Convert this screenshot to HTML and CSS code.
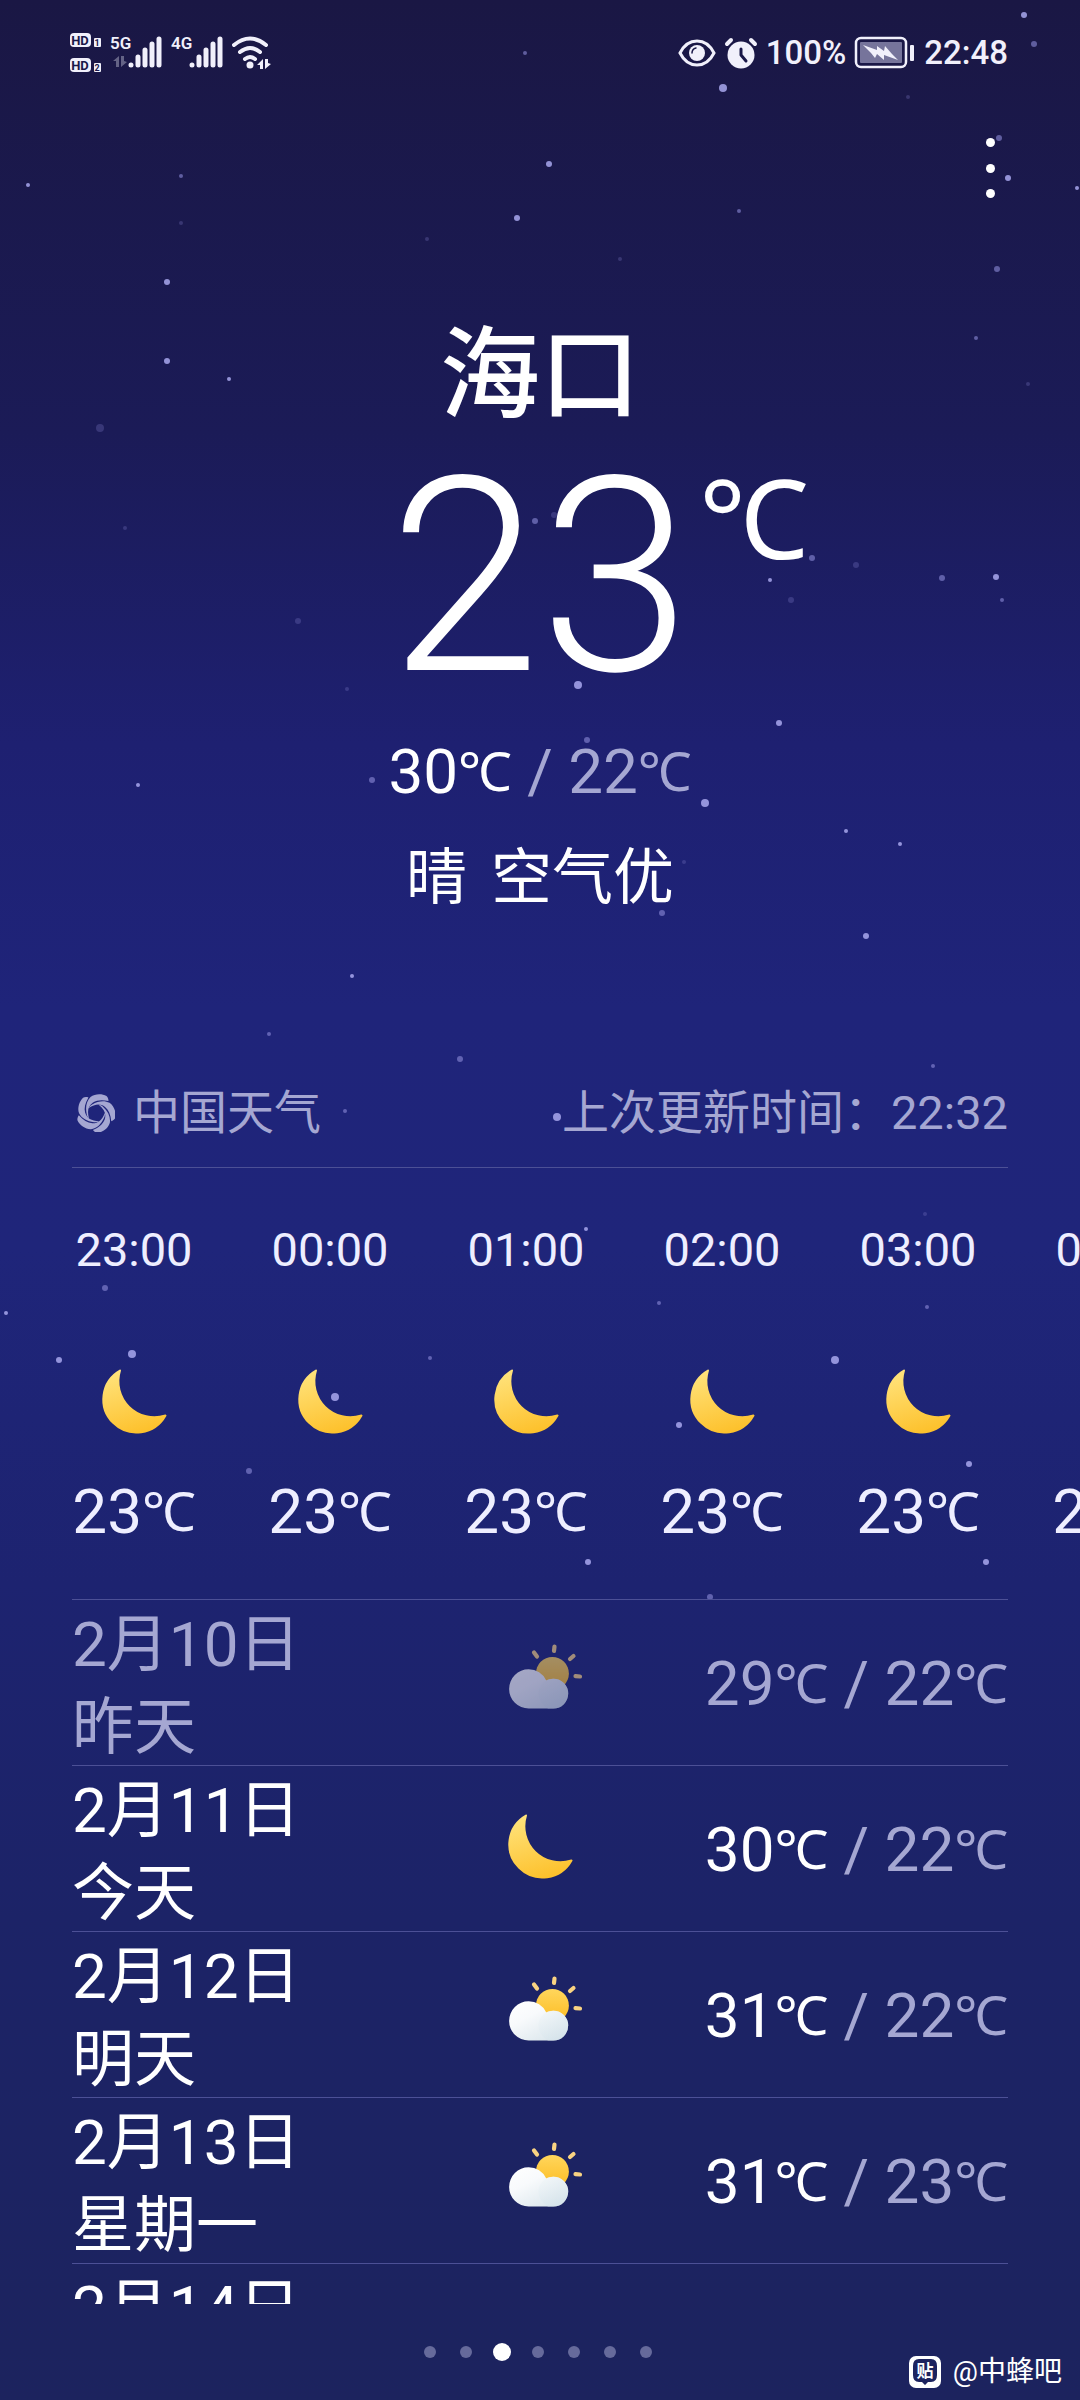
FILE: index.html
```html
<!DOCTYPE html>
<html lang="zh-CN">
<head>
<meta charset="utf-8">
<meta name="viewport" content="width=device-width, initial-scale=1">
<title>海口天气</title>
<link rel="stylesheet" href="styles.css">
</head>
<body>
<svg class="sky" viewBox="0 0 1080 2400" preserveAspectRatio="xMidYMid slice" aria-hidden="true">
  <g class="stars-bright">
    <circle cx="1024" cy="15" r="3"/><circle cx="723" cy="88" r="4"/><circle cx="1008" cy="178" r="3"/><circle cx="1077" cy="188" r="2"/>
    <circle cx="549" cy="164" r="3"/><circle cx="517" cy="218" r="3"/><circle cx="28" cy="185" r="2"/><circle cx="167" cy="282" r="3"/>
    <circle cx="167" cy="361" r="3"/><circle cx="229" cy="379" r="2"/><circle cx="770" cy="580" r="2"/><circle cx="996" cy="577" r="3"/>
    <circle cx="578" cy="685" r="4"/><circle cx="779" cy="723" r="3"/><circle cx="705" cy="803" r="4"/><circle cx="138" cy="785" r="2"/>
    <circle cx="846" cy="831" r="2"/><circle cx="900" cy="844" r="2"/><circle cx="866" cy="936" r="3"/><circle cx="352" cy="976" r="2"/>
    <circle cx="557" cy="1117" r="4"/><circle cx="586" cy="1229" r="2"/><circle cx="6" cy="1313" r="2"/><circle cx="59" cy="1360" r="3"/>
    <circle cx="132" cy="1354" r="4"/><circle cx="335" cy="1397" r="4"/><circle cx="835" cy="1360" r="4"/><circle cx="679" cy="1425" r="3"/>
    <circle cx="969" cy="1464" r="3"/><circle cx="588" cy="1562" r="3"/><circle cx="986" cy="1562" r="3"/>
  </g>
  <g class="stars-dim">
    <circle cx="1034" cy="44" r="3"/><circle cx="999" cy="138" r="3"/><circle cx="525" cy="53" r="2"/><circle cx="181" cy="176" r="2"/>
    <circle cx="739" cy="211" r="2"/><circle cx="997" cy="269" r="3"/><circle cx="976" cy="338" r="2"/><circle cx="535" cy="521" r="3"/>
    <circle cx="812" cy="558" r="3"/><circle cx="1002" cy="600" r="2"/><circle cx="942" cy="578" r="3"/><circle cx="587" cy="740" r="3"/>
    <circle cx="372" cy="780" r="3"/><circle cx="662" cy="913" r="3"/><circle cx="460" cy="1059" r="3"/><circle cx="345" cy="1111" r="2"/>
    <circle cx="933" cy="1066" r="2"/><circle cx="105" cy="1288" r="3"/><circle cx="659" cy="1303" r="2"/><circle cx="927" cy="1307" r="2"/>
    <circle cx="430" cy="1358" r="2"/><circle cx="249" cy="1471" r="3"/><circle cx="710" cy="1597" r="3"/><circle cx="269" cy="1034" r="2"/>
  </g>
  <g class="stars-faint">
    <circle cx="908" cy="97" r="2"/><circle cx="181" cy="223" r="2"/><circle cx="100" cy="428" r="4"/><circle cx="125" cy="528" r="2"/>
    <circle cx="427" cy="239" r="2"/><circle cx="620" cy="259" r="2"/><circle cx="1028" cy="384" r="2"/><circle cx="554" cy="515" r="3"/>
    <circle cx="791" cy="600" r="3"/><circle cx="298" cy="621" r="3"/><circle cx="347" cy="689" r="2"/><circle cx="684" cy="862" r="2"/>
    <circle cx="925" cy="1214" r="2"/><circle cx="856" cy="565" r="3"/>
  </g>
</svg>

<svg class="defs" width="0" height="0" aria-hidden="true">
  <defs>
    <linearGradient id="moonFill" x1="0.3" y1="0" x2="0.6" y2="1">
      <stop offset="0" stop-color="#ffe27a"/><stop offset="1" stop-color="#fdc12c"/>
    </linearGradient>
    <linearGradient id="sunFill" x1="0" y1="0" x2="0" y2="1">
      <stop offset="0" stop-color="#ffd65c"/><stop offset="1" stop-color="#fdbc22"/>
    </linearGradient>
    <linearGradient id="cloudFill" x1="0" y1="0" x2="0.8" y2="1">
      <stop offset="0" stop-color="#ffffff"/><stop offset="0.4" stop-color="#f8fafc"/><stop offset="1" stop-color="#d9e5eb"/>
    </linearGradient>
    <linearGradient id="puffFill" x1="0.2" y1="0" x2="0.7" y2="1">
      <stop offset="0" stop-color="#f1f6f8"/><stop offset="1" stop-color="#d3e2ea"/>
    </linearGradient>
    <symbol id="moon" viewBox="0 0 88 88">
      <path fill="url(#moonFill)" stroke="url(#moonFill)" stroke-width="2" stroke-linejoin="round" d="M30 12.500A33.200 33.200 0 1 0 75.500 57.500A36 36 0 0 1 30 12.500Z"/>
    </symbol>
    <symbol id="partly" viewBox="0 0 88 88">
      <g transform="translate(13 7)">
        <g stroke="#f9d382" stroke-width="4.200" stroke-linecap="round">
          <path d="M45.500 2.500L45 7M25 8.500L28 12.500M61 15L64.500 12M66.500 32.200L71 32.500"/>
        </g>
        <circle cx="43.400" cy="29.500" r="16.500" fill="url(#sunFill)"/>
        <path fill="url(#cloudFill)" d="M19.700 25.300A19.600 19.600 0 0 0 19.700 64.500H44.300A14.900 14.900 0 0 0 44.300 34.700C42 34.700 39.500 35.400 37.300 36.500A19.600 19.600 0 0 0 19.700 25.300Z"/>
        <path fill="url(#puffFill)" opacity=".7" d="M44.300 34.700A14.900 14.900 0 0 1 44.300 64.500H39C33 61 29.500 56 29.500 49.600A14.900 14.900 0 0 1 44.300 34.700Z"/>
      </g>
    </symbol>
  </defs>
</svg>

<div class="status">
  <div class="status-side">
    <svg class="ico-hd" width="32" height="42" viewBox="0 0 32 42">
      <rect x="0" y="1" width="21" height="14" rx="4"/><text class="hd" x="10" y="13">HD</text>
      <rect x="24" y="6" width="7" height="9" rx="1"/><text class="sim" x="27" y="14">1</text>
      <rect x="0" y="26" width="21" height="14" rx="4"/><text class="hd" x="10" y="38">HD</text>
      <rect x="24" y="31" width="7" height="9" rx="1"/><text class="sim" x="27" y="39">2</text>
    </svg>
    <svg class="ico-signal" width="51" height="42" viewBox="0 0 51 42">
      <text x="-2" y="17">5G</text>
      <path opacity=".35" d="M7 24v11h-3v-6h-3zM9 35V24h3v5l3 1z"/>
      <path class="bars" d="M19 33v0M26 25v8M33 18v15M40 12v21M47 7v26"/>
    </svg>
    <svg class="ico-signal" width="51" height="42" viewBox="0 0 51 42">
      <text x="-2" y="17">4G</text>
      <path class="bars" d="M19 33v0M26 25v8M33 18v15M40 12v21M47 7v26"/>
    </svg>
    <svg class="ico-wifi" width="39" height="42" viewBox="0 0 39 42">
      <g fill="none" stroke="#f1f0fb" stroke-width="4" stroke-linecap="round">
        <path d="M2 13Q18 0 34 13M8 20Q18 12 28 20"/><path d="M13 27Q18 23 23 27"/>
      </g>
      <circle cx="18" cy="33" r="3.500" fill="#f1f0fb"/>
      <path fill="#f1f0fb" d="M31 27v10h-3v-4h-3zM33 37V27h3v4l3 1z"/>
    </svg>
  </div>
  <div class="status-side status-right">
    <svg width="38" height="30" viewBox="0 0 38 30">
      <path fill="none" stroke="#f1f0fb" stroke-width="3" d="M2 15C6 7 12 3 19 3S32 7 36 15C32 23 26 27 19 27S6 23 2 15Z"/>
      <circle cx="19" cy="15" r="8" fill="#f1f0fb"/>
      <path fill="none" stroke="#1a1849" stroke-width="1.500" stroke-linecap="round" d="M14 15Q14 11 18 10"/>
    </svg>
    <svg width="34" height="32" viewBox="0 0 34 32">
      <circle cx="17" cy="18" r="13.500" fill="#f1f0fb"/>
      <path fill="none" stroke="#f1f0fb" stroke-width="4" stroke-linecap="round" d="M3 7L7 3M27 3L31 7"/>
      <path fill="none" stroke="#1a1849" stroke-width="3" stroke-linecap="round" stroke-linejoin="round" d="M17 12V18L22 24"/>
    </svg>
    <span class="status-text">100%</span>
    <svg width="62" height="34" viewBox="0 0 62 34">
      <rect x="2" y="2" width="50" height="29" rx="5" fill="none" stroke="#f1f0fb" stroke-width="2.500"/>
      <rect x="6" y="6" width="42" height="21" rx="1" fill="#76749b"/>
      <path fill="#f1f0fb" d="M9 9L23 14V10L30 15L31 10L38 18L44 24L30 19L30 24L23 18L21 22L17 17Z"/>
      <rect x="56" y="9" width="4" height="16" rx="1" fill="#f1f0fb"/>
    </svg>
    <span class="status-text">22:48</span>
  </div>
</div>

<header class="toolbar">
  <button class="menu" type="button" aria-label="更多"><i></i><i></i><i></i></button>
</header>

<main class="weather">
  <section class="now">
    <h1 class="city">海口</h1>
    <div class="temp"><span class="temp-value">23</span><span class="temp-unit">℃</span></div>
    <p class="range">30<span class="deg">℃</span><span class="low"> / 22<span class="deg">℃</span></span></p>
    <p class="summary"><span>晴</span><span>空气优</span></p>
  </section>

  <div class="source">
    <a class="provider" href="#">
      <svg width="38" height="38" viewBox="-19 -19 38 38" fill="currentColor" aria-hidden="true">
        <path id="blade" d="M10.500-17C6-19.500-1-19.500-5.500-16C-9.500-12-10.800-6-9.300 1C-9 3-8 4.500-7 5.500C-9-2-8-7-3-10.500C1-13 6-13.500 12.500-12C12.500-14 11.800-16 10.500-17Z"/>
        <use href="#blade" transform="rotate(72)"/><use href="#blade" transform="rotate(144)"/>
        <use href="#blade" transform="rotate(216)"/><use href="#blade" transform="rotate(288)"/>
      </svg>
      <span>中国天气</span>
    </a>
    <span>上次更新时间：22:32</span>
  </div>

  <ul class="hours">
    <li><time>23:00</time><svg class="icon"><use href="#moon"/></svg><span class="hour-temp">23<span class="deg">℃</span></span></li>
    <li><time>00:00</time><svg class="icon"><use href="#moon"/></svg><span class="hour-temp">23<span class="deg">℃</span></span></li>
    <li><time>01:00</time><svg class="icon"><use href="#moon"/></svg><span class="hour-temp">23<span class="deg">℃</span></span></li>
    <li><time>02:00</time><svg class="icon"><use href="#moon"/></svg><span class="hour-temp">23<span class="deg">℃</span></span></li>
    <li><time>03:00</time><svg class="icon"><use href="#moon"/></svg><span class="hour-temp">23<span class="deg">℃</span></span></li>
    <li><time>04:00</time><svg class="icon"><use href="#moon"/></svg><span class="hour-temp">23<span class="deg">℃</span></span></li>
  </ul>

  <ul class="days">
    <li class="past"><div class="date">2月10日<br>昨天</div><svg class="icon"><use href="#partly"/></svg><div class="day-temp">29<span class="deg">℃</span><span class="low"> / 22<span class="deg">℃</span></span></div></li>
    <li><div class="date">2月11日<br>今天</div><svg class="icon"><use href="#moon"/></svg><div class="day-temp">30<span class="deg">℃</span><span class="low"> / 22<span class="deg">℃</span></span></div></li>
    <li><div class="date">2月12日<br>明天</div><svg class="icon"><use href="#partly"/></svg><div class="day-temp">31<span class="deg">℃</span><span class="low"> / 22<span class="deg">℃</span></span></div></li>
    <li><div class="date">2月13日<br>星期一</div><svg class="icon"><use href="#partly"/></svg><div class="day-temp">31<span class="deg">℃</span><span class="low"> / 23<span class="deg">℃</span></span></div></li>
    <li><div class="date">2月14日</div></li>
  </ul>
</main>

<nav class="pager" aria-label="城市">
  <i></i><i></i><i class="active"></i><i></i><i></i><i></i><i></i>
</nav>

<div class="watermark">
  <svg width="32" height="32" viewBox="0 0 32 32">
    <rect width="32" height="32" rx="7" fill="#fff"/>
    <path fill="#1c235f" d="M10 3H22Q28 3 28 10V19Q28 26 22 26H19L16 29L13 26H10Q4 26 4 19V10Q4 3 10 3Z"/>
    <text x="16" y="21">贴</text>
  </svg>
  <span>@中蜂吧</span>
</div>
</body>
</html>
```
FILE: styles.css
```css
* { box-sizing: border-box; margin: 0; padding: 0; }

body {
  position: relative;
  display: flex;
  flex-direction: column;
  height: 100vh;
  overflow: hidden;
  color: #fff;
  font-family: Roboto, "Noto Sans CJK SC", sans-serif;
  background: linear-gradient(#1a1744 0%, #1b1b57 18%, #1e2071 31%, #1f247a 42%, #1f257a 52%, #1d2370 66%, #1c2367 80%, #1c235e 100%);
}

ul { list-style: none; }
a { color: inherit; text-decoration: none; }
svg { display: block; flex: none; }

.sky { position: absolute; inset: 0; width: 100%; height: 100%; z-index: -1; }
.stars-bright { fill: #a9a8ee; opacity: .85; }
.stars-dim { fill: #8d8cd8; opacity: .6; }
.stars-faint { fill: #7d7cc8; opacity: .3; }
.defs { position: absolute; }

/* status bar */
.status {
  display: flex;
  justify-content: space-between;
  align-items: center;
  height: 106px;
  padding: 0 72px 0 70px;
  flex: none;
}
.status-side { display: flex; align-items: center; gap: 10px; }
.status-right { gap: 8px; }
.status-text { font-size: 33px; font-weight: 500; line-height: 40px; color: #f1f0fb; }
.ico-hd { fill: #f1f0fb; }
.ico-hd text { fill: #1a1849; font-weight: 700; text-anchor: middle; }
.hd { font-size: 13px; }
.sim { font-size: 9px; }
.ico-signal { fill: #f1f0fb; overflow: visible; }
.ico-signal text { font-size: 17px; font-weight: 600; }
.ico-wifi { margin-left: -2px; }
.bars { fill: none; stroke: #f1f0fb; stroke-width: 5; stroke-linecap: round; }

/* toolbar */
.toolbar { display: flex; justify-content: flex-end; height: 124px; padding: 24px 72px 0; flex: none; }
.menu {
  display: flex;
  flex-direction: column;
  align-items: center;
  justify-content: space-between;
  width: 36px;
  height: 76px;
  padding: 8px 0;
  border: 0;
  background: none;
}
.menu i { width: 9px; height: 9px; border-radius: 50%; background: #fff; }

.weather { display: flex; flex-direction: column; flex: 1; min-height: 0; }

/* current conditions */
.now { display: flex; flex-direction: column; align-items: center; padding-top: 76px; }
.city { font-size: 100px; font-weight: 500; line-height: 140px; }
.temp { display: grid; grid-template-columns: 1fr auto 1fr; align-self: stretch; line-height: 262px; }
.temp-value { grid-column: 2; font-size: 272px; font-weight: 300; }
.temp-unit { padding-left: 8px; font-family: "Noto Sans", sans-serif; font-size: 110px; line-height: 140px; }
.range { margin-top: 18px; font-size: 62px; line-height: 92px; white-space: pre; }
.low { color: #a5a7d2; }
.deg { font-family: "Noto Sans", sans-serif; font-size: 54px; line-height: 1; vertical-align: 2px; }
.summary { display: flex; gap: 24px; margin-top: 16px; font-size: 61px; line-height: 88px; }

/* data source */
.source {
  display: flex;
  justify-content: space-between;
  align-items: center;
  height: 110px;
  margin: 136px 72px 0;
  border-bottom: 1px solid #4c5096;
  color: #a5a7d2;
  font-size: 47px;
  line-height: 70px;
  flex: none;
}
.provider { display: flex; align-items: center; gap: 18px; padding-left: 5px; }

/* hourly forecast */
.hours {
  display: flex;
  gap: 72px;
  padding: 44px 0 47px 72px;
  overflow: hidden;
  flex: none;
  color: #eeeeff;
}
.hours li { display: flex; flex-direction: column; align-items: center; width: 124px; flex: none; }
.hours time { font-size: 47px; line-height: 76px; }
.icon { width: 88px; height: 88px; }
.hours .icon { margin: 70px 0 26px; }
.hour-temp { font-size: 62px; line-height: 80px; white-space: nowrap; }

/* daily forecast */
.days { flex: 1; min-height: 0; margin: 0 72px; overflow: hidden; font-size: 62px; }
.days li {
  display: grid;
  grid-template: 162px / 1fr auto 1fr;
  align-items: center;
  height: 166px;
  border-top: 1px solid #4c5096;
  line-height: 83px;
}
.date { align-self: start; padding-top: 3px; }
.day-temp { padding-top: 4px; text-align: right; white-space: pre; }
.past .date, .past .day-temp { color: #a5a7d2; }
.past .icon { opacity: .6; }

/* city pager */
.pager { display: flex; justify-content: center; align-items: center; height: 96px; padding-right: 4px; flex: none; }
.pager i { width: 12px; height: 12px; margin: 0 12px; border-radius: 50%; background: #666a9b; }
.pager .active { width: 18px; height: 18px; margin: 0 9px; background: #fff; }

.watermark {
  position: absolute;
  right: 18px;
  bottom: 8px;
  display: flex;
  align-items: center;
  gap: 12px;
  font-size: 28px;
  line-height: 40px;
}
.watermark text { fill: #fff; font-size: 17px; font-weight: 700; text-anchor: middle; }
```
